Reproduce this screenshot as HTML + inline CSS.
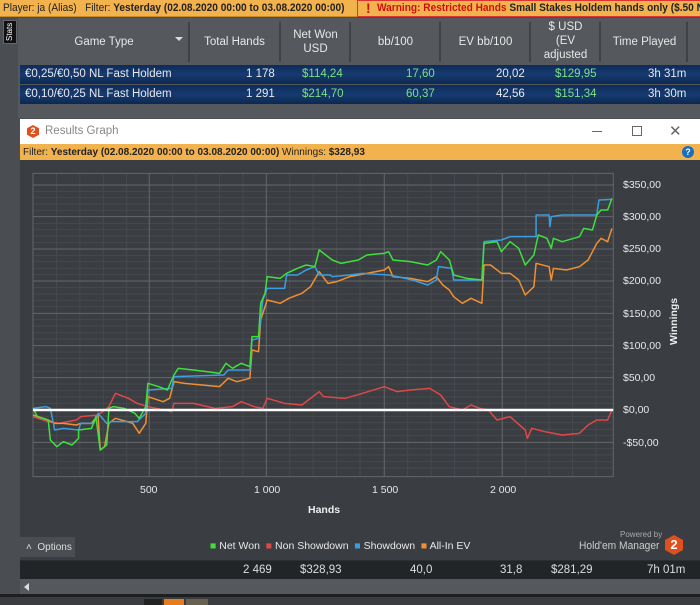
<!DOCTYPE html>
<html><head><meta charset="utf-8"><style>
*{margin:0;padding:0;box-sizing:border-box}
body{width:700px;height:605px;overflow:hidden;background:#4a4d51;font-family:"Liberation Sans",sans-serif;font-size:11px;position:relative;color:#ddd}
.a{position:absolute;white-space:nowrap}
.sep{position:absolute;top:22px;width:2px;height:40px;background:#404346}
.hd{position:absolute;top:20px;height:43px;display:flex;align-items:center;justify-content:center;text-align:center;color:#e8e8e8;font-size:11.5px;line-height:14px}
.row{position:absolute;left:20px;width:680px;height:19px;background:linear-gradient(#0e2b5a,#163b70 50%,#0c2850);color:#e8e8e8;font-size:11.5px;overflow:hidden}
.row span{position:absolute;top:3px}
.g{color:#7ee07e}
.yl{position:absolute;left:623px;color:#e8e8e8;font-size:10.5px}
.xl{position:absolute;top:484px;color:#e8e8e8;font-size:10.5px}
</style></head><body>
<div class="a" style="left:0;top:0;width:700px;height:17px;background:#f2b24e;border-bottom:1px solid #c88a2a"></div>
<div class="a" style="left:3px;top:2px;color:#222;font-size:11px;transform:scaleX(.92);transform-origin:left">Player: ja (Alias)&nbsp;&nbsp; Filter: <b>Yesterday (02.08.2020 00:00 to 03.08.2020 00:00)</b></div>
<div class="a" style="left:357px;top:0;width:343px;height:17px;border:1px solid #d33;border-right:none;overflow:hidden">
<div class="a" style="left:8px;top:-1px;color:#d01010;font-weight:bold;font-size:14px">!</div>
<div class="a" style="left:19px;top:1px;font-size:11px;font-weight:bold;color:#d01010;transform:scaleX(.92);transform-origin:left">Warning: Restricted Hands <span style="color:#222">Small Stakes Holdem hands only ($.50 NL, $1 LH</span></div>
</div>
<div class="a" style="left:0;top:18px;width:700px;height:100px;background:#55585c"></div>
<div class="a" style="left:0;top:18px;width:18px;height:100px;background:#4a4d51"></div>
<div class="a" style="left:3px;top:20px;width:14px;height:24px;background:#111;border:1px solid #666;overflow:hidden"><div style="position:absolute;left:1px;top:20px;color:#fff;font-size:8px;transform:rotate(-90deg);transform-origin:left top">Stats</div></div>
<div class="hd" style="left:20px;width:168px">Game Type</div>
<div class="a" style="left:175px;top:37px;width:0;height:0;border-left:4px solid transparent;border-right:4px solid transparent;border-top:4px solid #ddd"></div>
<div class="sep" style="left:188px"></div>
<div class="hd" style="left:190px;width:89px">Total Hands</div>
<div class="sep" style="left:279px"></div>
<div class="hd" style="left:281px;width:69px">Net Won<br>USD</div>
<div class="sep" style="left:349px"></div>
<div class="hd" style="left:351px;width:89px">bb/100</div>
<div class="sep" style="left:439px"></div>
<div class="hd" style="left:441px;width:89px">EV bb/100</div>
<div class="sep" style="left:529px"></div>
<div class="hd" style="left:531px;width:69px;top:17px;height:48px">$ USD<br>(EV<br>adjusted</div>
<div class="sep" style="left:599px"></div>
<div class="hd" style="left:601px;width:87px">Time Played</div>
<div class="sep" style="left:686px"></div>
<div class="row" style="top:65px"><span style="left:5px">€0,25/€0,50 NL Fast Holdem</span><span style="left:226px">1 178</span><span class="g" style="left:282px">$114,24</span><span class="g" style="left:386px">17,60</span><span style="left:476px">20,02</span><span class="g" style="left:535px">$129,95</span><span style="left:628px">3h 31m</span></div>
<div class="row" style="top:85px"><span style="left:5px">€0,10/€0,25 NL Fast Holdem</span><span style="left:226px">1 291</span><span class="g" style="left:282px">$214,70</span><span class="g" style="left:386px">60,37</span><span style="left:476px">42,56</span><span class="g" style="left:535px">$151,34</span><span style="left:628px">3h 30m</span></div>
<div class="a" style="left:20px;top:119px;width:680px;height:25px;background:#fff"></div>
<div class="a" style="left:27px;top:125px;width:12px;height:13px;background:#e0501e;clip-path:polygon(50% 0,100% 25%,100% 75%,50% 100%,0 75%,0 25%);color:#fff;font-size:9px;font-weight:bold;text-align:center;line-height:13px">2</div>
<div class="a" style="left:45px;top:125px;color:#888;font-size:11.5px">Results Graph</div>
<div class="a" style="left:592px;top:131px;width:10px;height:1px;background:#666"></div>
<div class="a" style="left:632px;top:126px;width:10px;height:10px;border:1px solid #666"></div>
<div class="a" style="left:669px;top:122px;color:#666;font-size:15px">✕</div>
<div class="a" style="left:20px;top:144px;width:680px;height:16px;background:#f2b24e"></div>
<div class="a" style="left:23px;top:147px;color:#222;font-size:10px">Filter: <b>Yesterday (02.08.2020 00:00 to 03.08.2020 00:00)</b> Winnings: <b>$328,93</b></div>
<div class="a" style="left:682px;top:146px;width:12px;height:12px;border-radius:50%;background:#1a6ec0;color:#fff;font-size:9px;font-weight:bold;text-align:center;line-height:12px">?</div>
<div class="a" style="left:20px;top:160px;width:680px;height:400px;background:#3a3d42"></div>
<svg class="a" style="left:20px;top:160px" width="680" height="370" viewBox="0 0 1568 1110" preserveAspectRatio="none">
<g stroke="#46494e" stroke-width="1" fill="none">
<path vector-effect="non-scaling-stroke" d="M30 94H1368M30 113H1368M30 132H1368M30 151H1368M30 190H1368M30 209H1368M30 228H1368M30 248H1368M30 286H1368M30 305H1368M30 325H1368M30 344H1368M30 382H1368M30 402H1368M30 421H1368M30 440H1368M30 479H1368M30 498H1368M30 518H1368M30 537H1368M30 576H1368M30 595H1368M30 614H1368M30 634H1368M30 672H1368M30 692H1368M30 711H1368M30 730H1368M30 769H1368M30 788H1368M30 808H1368M30 827H1368M30 866H1368M30 885H1368M30 905H1368M30 924H1368M84 40V950M138 40V950M192 40V950M246 40V950M352 40V950M406 40V950M460 40V950M514 40V950M622 40V950M676 40V950M730 40V950M784 40V950M894 40V950M948 40V950M1002 40V950M1056 40V950M1166 40V950M1220 40V950M1274 40V950M1328 40V950"/>
</g>
<g stroke="#64676b" fill="none">
<path vector-effect="non-scaling-stroke" d="M30 75H1368M30 170H1368M30 267H1368M30 363H1368M30 460H1368M30 557H1368M30 653H1368M30 847H1368M298 40V950M568 40V950M840 40V950M1112 40V950"/>
<rect x="30" y="40" width="1338" height="910" vector-effect="non-scaling-stroke"/>
</g>
<g fill="none" stroke-width="1.5" stroke-linejoin="round">
<polyline vector-effect="non-scaling-stroke" stroke="#e04848" points="30,770 65,785 90,790 130,780 140,770 180,765 205,740 220,700 250,715 270,730 295,740 350,755 355,730 400,730 450,745 490,740 510,725 540,740 560,745 570,715 610,730 650,735 690,695 700,710 750,715 790,700 840,680 870,695 900,690 945,685 970,705 990,740 1020,750 1040,735 1060,745 1080,750 1100,780 1130,770 1165,810 1170,835 1180,805 1210,815 1250,825 1290,820 1310,795 1330,780 1355,780 1365,750"/>
<polyline vector-effect="non-scaling-stroke" stroke="#f09030" points="30,765 65,780 80,790 100,790 130,795 140,790 165,790 180,765 185,870 195,860 205,790 220,775 260,790 275,820 290,790 295,710 330,725 345,715 355,665 380,670 420,675 460,680 480,655 500,665 530,655 535,570 550,575 555,480 570,420 600,430 620,415 650,400 670,380 690,335 710,370 730,365 760,350 800,340 840,330 850,320 860,350 900,355 940,365 960,350 975,375 990,390 1000,410 1020,430 1040,415 1065,430 1070,315 1085,315 1110,340 1130,340 1150,360 1165,405 1185,380 1190,310 1220,320 1225,360 1230,325 1260,330 1290,320 1310,300 1330,250 1340,235 1355,245 1365,205"/>
<polyline vector-effect="non-scaling-stroke" stroke="#3a9ee0" points="30,745 60,740 70,745 80,810 100,805 135,810 140,790 170,790 180,760 200,790 210,785 270,785 290,760 295,690 350,685 355,650 470,645 480,630 530,630 535,540 550,535 560,420 570,385 610,385 615,345 640,345 660,330 680,320 690,345 715,345 720,350 760,345 790,340 850,345 870,350 905,360 940,375 960,360 965,320 995,325 1000,360 1065,360 1070,245 1110,240 1130,230 1190,230 1190,165 1220,165 1222,200 1225,170 1250,165 1330,165 1335,120 1365,118"/>
<polyline vector-effect="non-scaling-stroke" stroke="#3ee03e" points="30,745 40,770 65,780 70,840 85,860 100,845 120,855 135,835 135,810 165,805 175,770 185,870 200,855 205,745 215,740 240,745 265,760 275,775 290,740 295,670 320,680 340,690 355,645 365,625 400,630 430,635 460,640 475,610 490,625 510,610 530,620 535,530 550,530 555,430 565,400 570,350 600,355 615,340 640,325 660,315 680,320 690,270 710,290 720,300 740,310 780,300 800,285 840,280 850,275 860,300 900,305 940,315 960,300 970,275 990,300 1000,345 1030,355 1065,360 1070,250 1100,245 1110,275 1130,245 1150,265 1165,315 1185,285 1195,225 1215,235 1225,265 1230,235 1250,245 1290,230 1300,205 1320,210 1330,165 1340,150 1355,150 1365,115"/>
</g>
<path vector-effect="non-scaling-stroke" d="M30 750H1368" stroke="#fff" stroke-width="2.5"/>
</svg>
<div class="yl" style="top:179px">$350,00</div>
<div class="yl" style="top:211px">$300,00</div>
<div class="yl" style="top:243px">$250,00</div>
<div class="yl" style="top:275px">$200,00</div>
<div class="yl" style="top:308px">$150,00</div>
<div class="yl" style="top:340px">$100,00</div>
<div class="yl" style="top:372px">$50,00</div>
<div class="yl" style="top:404px">$0,00</div>
<div class="yl" style="top:437px">-$50,00</div>
<div class="a" style="left:668px;top:345px;color:#eee;font-weight:bold;font-size:10.5px;transform:rotate(-90deg);transform-origin:left top">Winnings</div>
<div class="xl" style="left:140px">500</div>
<div class="xl" style="left:254px">1 000</div>
<div class="xl" style="left:372px">1 500</div>
<div class="xl" style="left:490px">2 000</div>
<div class="a" style="left:308px;top:504px;color:#eee;font-weight:bold;font-size:10.5px">Hands</div>
<div class="a" style="left:20px;top:537px;width:55px;height:20px;background:#4a4d51"></div>
<div class="a" style="left:26px;top:542px;color:#ddd;font-size:10px">˄ &nbsp;Options</div>
<div class="a" style="left:210px;top:540px;color:#e8e8e8;font-size:10.5px"><span style="color:#3ee03e">■</span> Net Won &nbsp;<span style="color:#e04848">■</span> Non Showdown &nbsp;<span style="color:#3a9ee0">■</span> Showdown &nbsp;<span style="color:#f09030">■</span> All-In EV</div>
<div class="a" style="left:620px;top:530px;color:#aaa;font-size:8px">Powered by</div>
<div class="a" style="left:579px;top:540px;color:#ccc;font-size:11px;transform:scaleX(.93);transform-origin:left">Hold'em Manager</div>
<div class="a" style="left:665px;top:535px;width:18px;height:20px;background:#e0501e;clip-path:polygon(50% 0,100% 25%,100% 75%,50% 100%,0 75%,0 25%);color:#fff;font-size:13px;font-weight:bold;text-align:center;line-height:20px">2</div>
<div class="a" style="left:20px;top:560px;width:680px;height:1px;background:#2c2e31"></div>
<div class="a" style="left:20px;top:561px;width:680px;height:18px;background:#222528"></div>
<div class="a" style="left:243px;top:564px;color:#ddd;font-size:11.5px">2 469</div>
<div class="a" style="left:300px;top:564px;color:#ddd;font-size:11.5px">$328,93</div>
<div class="a" style="left:410px;top:564px;color:#ddd;font-size:11.5px">40,0</div>
<div class="a" style="left:500px;top:564px;color:#ddd;font-size:11.5px">31,8</div>
<div class="a" style="left:551px;top:564px;color:#ddd;font-size:11.5px">$281,29</div>
<div class="a" style="left:647px;top:564px;color:#ddd;font-size:11.5px">7h 01m</div>
<div class="a" style="left:20px;top:579px;width:680px;height:15px;background:#55585c"></div>
<div class="a" style="left:24px;top:583px;width:0;height:0;border-top:4px solid transparent;border-bottom:4px solid transparent;border-right:5px solid #ddd"></div>
<div class="a" style="left:0;top:594px;width:700px;height:3px;background:#1c1e20"></div>
<div class="a" style="left:0;top:597px;width:700px;height:8px;background:#3a3c3f"></div>
<div class="a" style="left:144px;top:599px;width:18px;height:6px;background:#222"></div>
<div class="a" style="left:164px;top:599px;width:20px;height:6px;background:#e87b1a"></div>
<div class="a" style="left:186px;top:599px;width:22px;height:6px;background:#6a6050"></div>
</body></html>
